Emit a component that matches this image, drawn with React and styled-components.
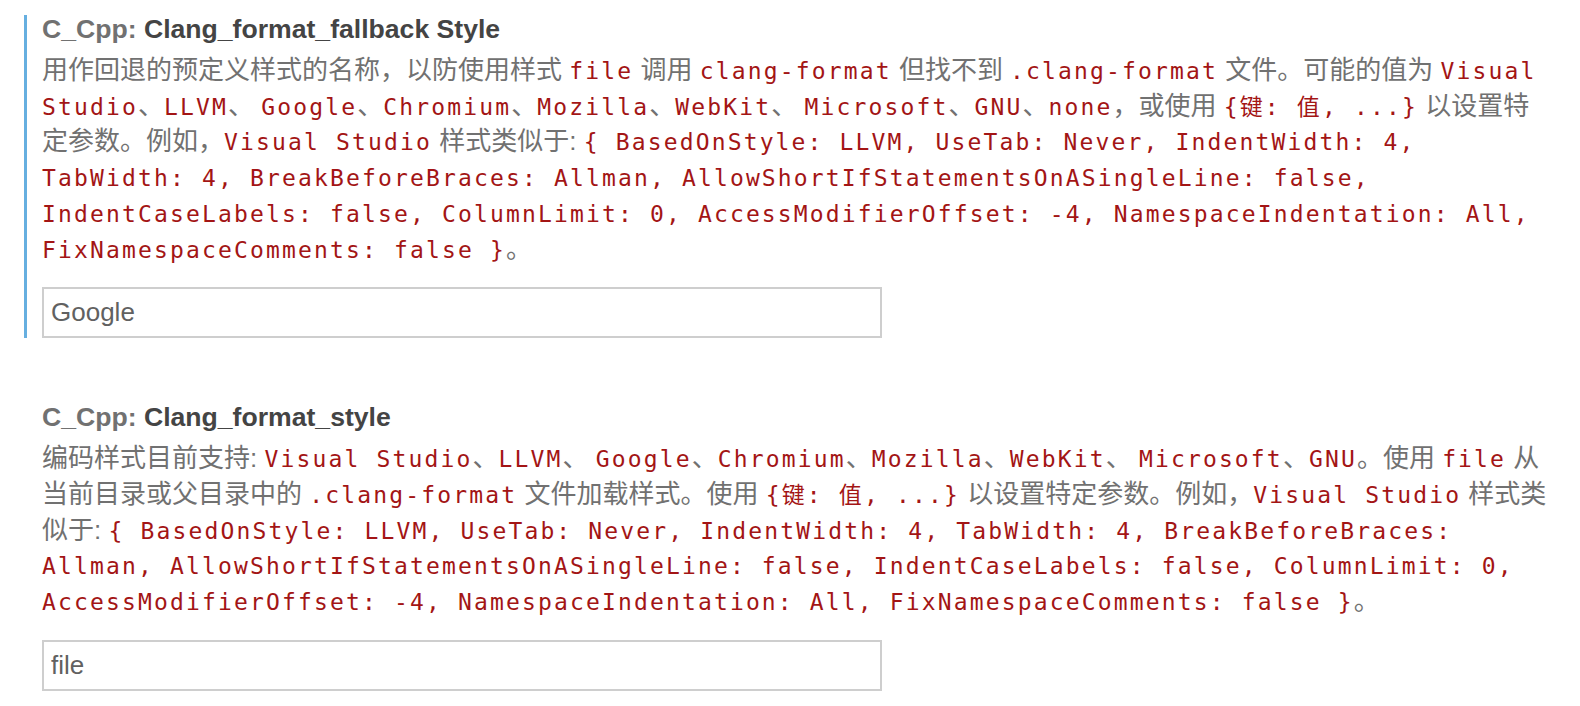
import React from 'react';
import styled, { createGlobalStyle } from 'styled-components';

const GlobalStyle = createGlobalStyle`
    html, body {
        margin: 0;
        padding: 0;
        background: #ffffff;
    }
`;

const Page = styled.div`
    padding: 15px 0 0 24px;
    font-family: "Liberation Sans", "Noto Sans CJK SC", sans-serif;
`;

const Setting = styled.div`
    border-left: 3px solid ${props => props.modified ? '#66afe0' : 'transparent'};
    padding-left: 15px;
    & + & {
        margin-top: 65px;
    }
`;

const Title = styled.div`
    font-size: 26.6px;
    line-height: 28px;
    font-weight: 700;
    color: #444444;
    white-space: nowrap;
`;

const Category = styled.span`
    color: #717171;
`;

const Description = styled.div`
    margin-top: 10px;
    font-size: 26px;
    line-height: 35.7px;
    color: #717171;
    white-space: nowrap;
`;

const Code = styled.code`
    font-family: "DejaVu Sans Mono", "Noto Sans CJK SC", monospace;
    font-size: 23px;
    line-height: 20px;
    letter-spacing: 2.15px;
    color: #a31515;
`;

const Input = styled.div`
    margin-top: 20px;
    box-sizing: border-box;
    width: 840px;
    height: 51px;
    border: 2px solid #cecece;
    padding: 0 7px;
    display: flex;
    align-items: center;
    font-size: 26px;
    color: #616161;
    background: #ffffff;
`;

const App = () => {
    return (
        <Page>
            <GlobalStyle />
            <Setting modified>
                <Title>
                    <Category>C_Cpp: </Category>Clang_format_fallback Style
                </Title>
                <Description>
                    用作回退的预定义样式的名称，以防使用样式 <Code>file</Code> 调用 <Code>clang-format</Code> 但找不到 <Code>.clang-format</Code> 文件。可能的值为 <Code>Visual</Code>
                    <br />
                    <Code>Studio</Code>、<Code>LLVM</Code>、 <Code>Google</Code>、<Code>Chromium</Code>、<Code>Mozilla</Code>、<Code>WebKit</Code>、 <Code>Microsoft</Code>、<Code>GNU</Code>、<Code>none</Code>，或使用 <Code>{'{键: 值, ...}'}</Code> 以设置特
                    <br />
                    定参数。例如，<Code>Visual Studio</Code> 样式类似于: <Code>{'{ BasedOnStyle: LLVM, UseTab: Never, IndentWidth: 4,'}</Code>
                    <br />
                    <Code>TabWidth: 4, BreakBeforeBraces: Allman, AllowShortIfStatementsOnASingleLine: false,</Code>
                    <br />
                    <Code>IndentCaseLabels: false, ColumnLimit: 0, AccessModifierOffset: -4, NamespaceIndentation: All,</Code>
                    <br />
                    <Code>{'FixNamespaceComments: false }'}</Code>。
                </Description>
                <Input>Google</Input>
            </Setting>

            <Setting>
                <Title>
                    <Category>C_Cpp: </Category>Clang_format_style
                </Title>
                <Description>
                    编码样式目前支持: <Code>Visual Studio</Code>、<Code>LLVM</Code>、 <Code>Google</Code>、<Code>Chromium</Code>、<Code>Mozilla</Code>、<Code>WebKit</Code>、 <Code>Microsoft</Code>、<Code>GNU</Code>。使用 <Code>file</Code> 从
                    <br />
                    当前目录或父目录中的 <Code>.clang-format</Code> 文件加载样式。使用 <Code>{'{键: 值, ...}'}</Code> 以设置特定参数。例如，<Code>Visual Studio</Code> 样式类
                    <br />
                    似于: <Code>{'{ BasedOnStyle: LLVM, UseTab: Never, IndentWidth: 4, TabWidth: 4, BreakBeforeBraces:'}</Code>
                    <br />
                    <Code>Allman, AllowShortIfStatementsOnASingleLine: false, IndentCaseLabels: false, ColumnLimit: 0,</Code>
                    <br />
                    <Code>{'AccessModifierOffset: -4, NamespaceIndentation: All, FixNamespaceComments: false }'}</Code>。
                </Description>
                <Input>file</Input>
            </Setting>
        </Page>
    );
};

export default App;
